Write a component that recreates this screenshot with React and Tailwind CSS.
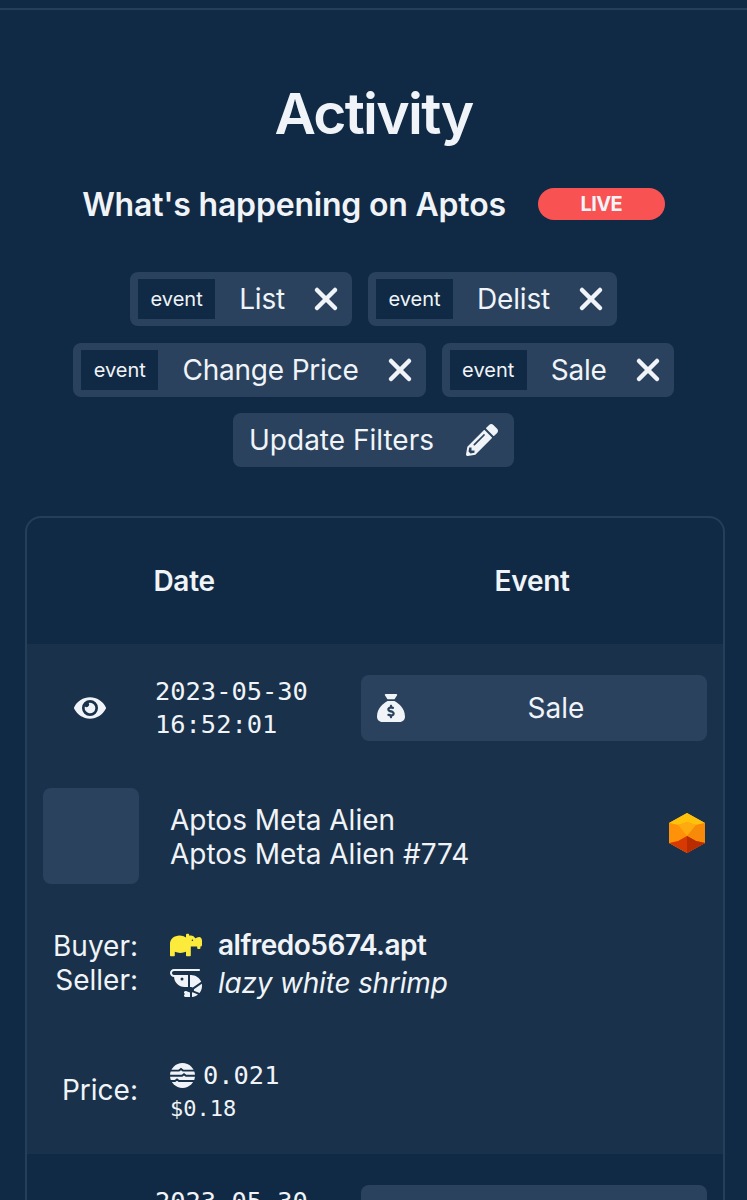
import React from "react";
import { X } from "lucide-react";
import { FaEye, FaHippo, FaPencilAlt } from "react-icons/fa";
import { FaSackDollar, FaShrimp } from "react-icons/fa6";

const filters = [["List", "Delist"], ["Change Price", "Sale"]];

function FilterChip({ label }) {
    return (
        <div className="flex items-center h-[54px] pl-2 pr-2 rounded-lg bg-[#2a425e]">
            <span className="flex items-center h-10 px-[12.5px] bg-[#102a45] text-[20px]">event</span>
            <span className="ml-6 text-[28px] tracking-[-0.2px]">{label}</span>
            <X size={36} strokeWidth={3} className="ml-[23px]" />
        </div>
    );
}

function AptosIcon() {
    return (
        <svg viewBox="0 0 25 25" className="w-[25px] h-[25px]">
            <circle cx="12.5" cy="12.5" r="12.5" fill="#f0f4f8" />
            <path d="M0 7.6h9l2-1.6 2 1.6h12M0 12.8h12l2-1.6 2 1.6h9M0 18h5l2-1.6 2 1.6h16" fill="none" stroke="#19314a" strokeWidth="1.9" />
        </svg>
    );
}

function GemLogo() {
    return (
        <svg viewBox="0 0 36 40" className="w-9 h-10 mt-[25px] mr-0.5 self-start">
            <polygon points="18,0 36,10 36,30 18,40 0,30 0,10" fill="#ff9c0e" />
            <polygon points="18,0 36,10 27,12 18,9 9,12 0,10" fill="#ffc20c" />
            <polygon points="9,12 18,9 27,12 18,23" fill="#ffab10" />
            <polygon points="0,10 9,12 18,23 9,28 0,30" fill="#ff9208" />
            <polygon points="36,10 27,12 18,23 27,28 36,30" fill="#f78a08" />
            <polygon points="0,30 9,28 18,23 27,28 36,30 18,40" fill="#d63a02" />
            <polygon points="18,23 27,28 36,30 18,40" fill="#b92c00" />
        </svg>
    );
}

export default function App() {
    return (
        <div className="h-[1200px] overflow-hidden bg-[#102a45] text-[#f0f4f8] font-['Inter',sans-serif]">
            <div className="h-2" />
            <div className="h-0.5 bg-[#243f5c]" />

            <h1 className="mt-[64px] text-center text-[57px] leading-[80px] font-semibold tracking-[-1.75px]">Activity</h1>

            <div className="mt-[29px] flex items-center justify-center gap-8">
                <h2 className="text-[32px] leading-[44px] font-semibold tracking-[-0.2px]">What's happening on Aptos</h2>
                <span className="flex items-center justify-center w-[127px] h-8 -mt-0.5 rounded-full bg-[#f85252] text-[20px] font-bold tracking-[-0.6px]">LIVE</span>
            </div>

            <div className="mt-[45px] flex flex-col items-center gap-[16.5px]">
                {filters.map((row) => (
                    <div key={row[0]} className="flex gap-4">
                        {row.map((label) => (
                            <FilterChip key={label} label={label} />
                        ))}
                    </div>
                ))}
                <button className="flex items-center h-[54px] px-4 rounded-lg bg-[#2a425e] text-[28px]">
                    Update Filters
                    <FaPencilAlt className="ml-8 text-[32px]" />
                </button>
            </div>

            <div className="mt-[49px] ml-[25px] mr-[22px] border-2 border-b-0 border-[#243f5c] rounded-t-2xl">
                <div className="flex items-center h-[126px] text-[28px] font-semibold tracking-[-0.3px]">
                    <span className="w-[316px] text-center">Date</span>
                    <span className="w-[384px] text-center">Event</span>
                </div>

                <div className="bg-[#19314a] h-[510px] px-4 pt-[31px]">
                    <div className="flex items-center">
                        <div className="w-[96px] flex justify-center pr-0.5">
                            <FaEye className="text-[32px]" />
                        </div>
                        <div className="ml-4 w-[206px] font-['DejaVu_Sans_Mono',monospace] text-[25.4px] leading-[33px]">
                            2023-05-30
                            <br />
                            16:52:01
                        </div>
                        <div className="flex items-center w-[346px] h-[66px] rounded-lg bg-[#2a425e] px-4">
                            <FaSackDollar className="text-[28px]" />
                            <span className="flex-1 ml-4 text-center text-[28px]">Sale</span>
                        </div>
                    </div>

                    <div className="mt-[47px] flex items-center">
                        <div className="w-24 h-24 rounded-lg bg-[#2a425e]" />
                        <div className="ml-[31px] flex-1 pt-0.5 text-[28px] leading-[34px]">
                            Aptos Meta Alien
                            <br />
                            Aptos Meta Alien #774
                        </div>
                        <GemLogo />
                    </div>

                    <div className="mt-[45px] flex text-[28px] leading-[34px]">
                        <div className="w-24 text-right pr-px">
                            Buyer:
                            <br />
                            Seller:
                        </div>
                        <div className="ml-[31px]">
                            <div className="flex items-center h-[34px] pb-[3px]">
                                <FaHippo className="text-[32px] text-[#fdeb3b]" />
                                <span className="ml-4 font-semibold tracking-[-0.5px]">alfredo5674.apt</span>
                            </div>
                            <div className="flex items-center h-[34px] pt-[6px]">
                                <FaShrimp className="text-[32px]" />
                                <span className="ml-4 italic tracking-[-0.2px]">lazy white shrimp</span>
                            </div>
                        </div>
                    </div>

                    <div className="mt-[61px] flex items-center">
                        <div className="w-24 text-right pr-px pb-1 text-[28px]">Price:</div>
                        <div className="ml-[31px] font-['DejaVu_Sans_Mono',monospace]">
                            <div className="flex items-center gap-2 text-[25.4px] leading-[34px]">
                                <AptosIcon />
                                0.021
                            </div>
                            <div className="text-[22px] leading-[33px]">$0.18</div>
                        </div>
                    </div>
                </div>

                <div className="px-4 pt-[31px] flex items-start">
                    <div className="w-[96px]" />
                    <div className="ml-4 w-[206px] font-['DejaVu_Sans_Mono',monospace] text-[25.4px] leading-[33px]">
                        2023-05-30
                    </div>
                    <div className="w-[346px] h-[66px] rounded-lg bg-[#2a425e]" />
                </div>
            </div>
        </div>
    );
}
